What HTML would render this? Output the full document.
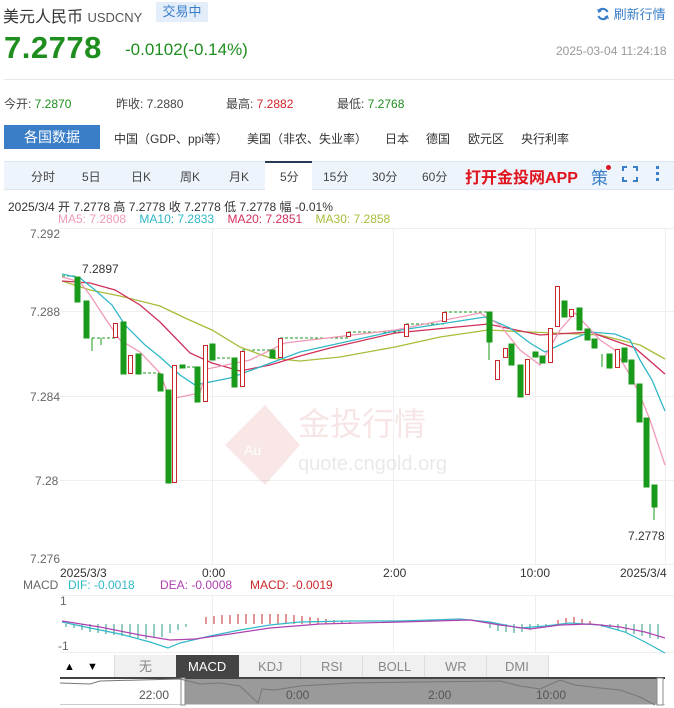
<!DOCTYPE html>
<html><head><meta charset="utf-8"><style>
*{margin:0;padding:0;box-sizing:border-box}
body{width:674px;height:708px;overflow:hidden;background:#fff;font-family:"Liberation Sans","Noto Sans CJK SC",sans-serif;color:#333;position:relative}
.a{position:absolute;white-space:nowrap}
</style></head><body>
<div class="a" style="left:3px;top:3px;font-size:16px;color:#333">美元人民币 <span style="font-size:13px;color:#555">USDCNY</span></div>
<div class="a" style="left:156px;top:2px;width:52px;height:20px;background:#e3eefa;color:#3a7ec8;font-size:13px;line-height:20px;text-align:center">交易中</div>
<div class="a" style="left:596px;top:4px;font-size:13px;color:#3a7ec8"><svg width="14" height="14" viewBox="0 0 14 14" style="vertical-align:-2px"><path d="M11.5 5A5 5 0 0 0 2.5 4.5M2.5 9A5 5 0 0 0 11.5 9.5" stroke="#3a7ec8" stroke-width="2.2" fill="none"/><path d="M1 2l1.5 4 3.5-2z M13 12l-1.5-4-3.5 2z" fill="#3a7ec8"/></svg> 刷新行情</div>
<div class="a" style="left:4px;top:30px;font-size:31px;font-weight:bold;color:#1e8e1e;letter-spacing:0.5px">7.2778</div>
<div class="a" style="left:125px;top:40px;font-size:17px;color:#1e8e1e">-0.0102(-0.14%)</div>
<div class="a" style="left:556px;top:44px;font-size:12px;color:#999">2025-03-04 11:24:18</div>
<div class="a" style="left:4px;top:79px;width:670px;height:1px;background:#e8e8e8"></div>
<div class="a" style="left:4px;top:95px;font-size:12px;color:#444">今开: <span style="color:#1e8e1e">7.2870</span></div>
<div class="a" style="left:116px;top:95px;font-size:12px;color:#444">昨收: 7.2880</div>
<div class="a" style="left:226px;top:95px;font-size:12px;color:#444">最高: <span style="color:#d0252a">7.2882</span></div>
<div class="a" style="left:337px;top:95px;font-size:12px;color:#444">最低: <span style="color:#1e8e1e">7.2768</span></div>
<div class="a" style="left:4px;top:125px;width:96px;height:24px;background:#3a7ec8;color:#fff;font-size:14px;line-height:24px;text-align:center">各国数据</div>
<div class="a" style="left:114px;top:130px;font-size:12px;color:#333">中国（GDP、ppi等）</div>
<div class="a" style="left:247px;top:130px;font-size:12px;color:#333">美国（非农、失业率）</div>
<div class="a" style="left:385px;top:130px;font-size:12px;color:#333">日本</div>
<div class="a" style="left:426px;top:130px;font-size:12px;color:#333">德国</div>
<div class="a" style="left:468px;top:130px;font-size:12px;color:#333">欧元区</div>
<div class="a" style="left:521px;top:130px;font-size:12px;color:#333">央行利率</div>
<div class="a" style="left:4px;top:161px;width:670px;height:29px;background:#eef4fb;border-top:1px solid #dde6f0;border-bottom:1px solid #dde6f0"></div>
<div class="a" style="left:265px;top:161px;width:47px;height:30px;background:#fff;border-top:2px solid #2a3a55"></div>
<div class="a" style="top:168px;left:0;font-size:12px;color:#444;width:674px;height:16px">
<span class="a" style="left:31px">分时</span><span class="a" style="left:82px">5日</span><span class="a" style="left:131px">日K</span><span class="a" style="left:180px">周K</span><span class="a" style="left:229px">月K</span><span class="a" style="left:280px">5分</span><span class="a" style="left:323px">15分</span><span class="a" style="left:372px">30分</span><span class="a" style="left:422px">60分</span>
</div>
<div class="a" style="left:465px;top:164px;font-size:16px;font-weight:bold;color:#e0141e">打开金投网APP</div>
<div class="a" style="left:591px;top:164px;font-size:17px;color:#3a7ec8">策</div>
<div class="a" style="left:606px;top:165px;width:5px;height:5px;border-radius:50%;background:#e0141e"></div>
<svg class="a" style="left:622px;top:166px" width="16" height="16"><path d="M1 5V1h4M11 1h4v4M15 11v4h-4M5 15H1v-4" stroke="#3a7ec8" stroke-width="2" fill="none"/></svg>
<div class="a" style="left:656px;top:166px;width:3px;height:3px;background:#3a7ec8;box-shadow:0 6px 0 #3a7ec8,0 12px 0 #3a7ec8"></div>
<div class="a" style="left:8px;top:198px;font-size:12px;color:#333">2025/3/4 开 7.2778 高 7.2778 收 7.2778 低 7.2778 幅 -0.01%</div>
<div class="a" style="left:58px;top:212px;font-size:12px"><span style="color:#f09ab8">MA5: 7.2808</span>&nbsp;&nbsp;&nbsp;&nbsp;<span style="color:#30b8c8">MA10: 7.2833</span>&nbsp;&nbsp;&nbsp;&nbsp;<span style="color:#d0305a">MA20: 7.2851</span>&nbsp;&nbsp;&nbsp;&nbsp;<span style="color:#a8bc3a">MA30: 7.2858</span></div>

<svg class="a" style="left:0;top:0" width="674" height="708" font-family="Liberation Sans, sans-serif" font-size="12">
<g stroke="#eee" stroke-width="1">
<line x1="60" y1="228.5" x2="674" y2="228.5"/><line x1="60" y1="311.5" x2="674" y2="311.5"/><line x1="60" y1="396.5" x2="674" y2="396.5"/><line x1="60" y1="480.5" x2="674" y2="480.5"/><line x1="60" y1="564.5" x2="674" y2="564.5"/>
<line x1="212.5" y1="228" x2="212.5" y2="565"/><line x1="393.5" y1="228" x2="393.5" y2="565"/><line x1="535.5" y1="228" x2="535.5" y2="565"/><line x1="665.5" y1="228" x2="665.5" y2="565"/>
<line x1="60" y1="595.5" x2="674" y2="595.5"/><line x1="60" y1="652.5" x2="674" y2="652.5"/>
<line x1="212.5" y1="595" x2="212.5" y2="652"/><line x1="393.5" y1="595" x2="393.5" y2="652"/><line x1="535.5" y1="595" x2="535.5" y2="652"/>
</g>
<g fill="#666"><text x="30" y="238">7.292</text><text x="30" y="316">7.288</text><text x="30" y="401">7.284</text><text x="35" y="485">7.28</text><text x="30" y="563">7.276</text></g>
<g opacity="0.12"><path d="M265 405 L300 445 L265 485 L225 445Z" fill="#d04040"/><text x="244" y="455" fill="#fff" font-size="14">Au</text><text x="298" y="435" fill="#c03030" font-size="32" font-family="Noto Sans CJK SC">金投行情</text><text x="298" y="470" fill="#555" font-size="20">quote.cngold.org</text></g>
<g stroke="#1a9a1a" stroke-dasharray="3,2"><line x1="62" y1="276" x2="77" y2="276"/><line x1="92" y1="338" x2="115" y2="338"/><line x1="138" y1="373" x2="160" y2="373"/><line x1="182" y1="367" x2="197" y2="367"/><line x1="212" y1="358" x2="234" y2="358"/><line x1="242" y1="350" x2="272" y2="350"/><line x1="280" y1="338" x2="348" y2="338"/><line x1="348" y1="332" x2="406" y2="332"/><line x1="406" y1="324" x2="444" y2="324"/><line x1="444" y1="312" x2="489" y2="312"/></g>
<g fill="none" stroke-width="1.3">
<polyline stroke="#a8bc3a" points="62,281 90,290 120,296 160,306 185,318 212,330 240,347 270,358 300,361 340,357 395,347 440,337 488,330 530,332 600,335 640,345 665,359"/>
<polyline stroke="#d0305a" points="62,281 90,283 115,290 140,305 160,322 190,353 212,363 240,371 270,365 300,356 330,348 395,333 488,324 540,335 590,332 635,348 665,374"/>
<polyline stroke="#30b8c8" points="62,274 80,278 95,290 112,305 125,325 145,345 160,357 180,375 195,385 230,378 260,367 300,352 395,331 485,317 510,328 530,343 545,352 570,340 590,332 615,334 630,340 640,360 652,380 665,411"/>
<polyline stroke="#f09ab8" points="62,277 80,282 90,295 105,318 120,340 140,352 160,373 170,399 200,393 207,369 250,360 285,343 395,330 480,313 500,325 520,350 540,365 560,330 575,313 600,340 615,350 630,375 640,395 650,420 665,465"/>
</g>
<g stroke-width="1">
<g fill="#1a9a1a" stroke="#1a9a1a">
<rect x="75" y="277" width="5" height="25"/><rect x="84" y="301" width="5" height="37"/><line x1="92" y1="338" x2="92" y2="351"/><line x1="101" y1="338" x2="101" y2="345"/><rect x="121" y="322" width="5" height="52"/><rect x="136" y="354" width="5" height="20"/><rect x="158" y="374" width="5" height="17"/><rect x="166" y="390" width="5" height="93"/><rect x="180" y="365" width="5" height="3"/><rect x="195" y="367" width="5" height="35"/><rect x="210" y="344" width="5" height="16"/><rect x="232" y="358" width="5" height="29"/><rect x="270" y="350" width="5" height="8"/><rect x="487" y="312" width="5" height="30"/><line x1="489" y1="342" x2="489" y2="360"/><rect x="509" y="344" width="5" height="21"/><rect x="518" y="365" width="5" height="32"/><rect x="533" y="352" width="5" height="5"/><rect x="540" y="356" width="5" height="7"/><rect x="562" y="301" width="5" height="16"/><rect x="577" y="308" width="5" height="22"/><rect x="585" y="329" width="5" height="11"/><rect x="592" y="339" width="5" height="9"/><line x1="602" y1="354" x2="602" y2="367"/><rect x="607" y="354" width="5" height="14"/><rect x="622" y="348" width="5" height="14"/><rect x="629" y="360" width="5" height="24"/><rect x="637" y="384" width="5" height="38"/><rect x="644" y="418" width="5" height="69"/><rect x="652" y="485" width="5" height="22"/><line x1="654" y1="507" x2="654" y2="520"/>
</g>
<g fill="#fff" stroke="#c8282a">
<rect x="113.5" y="323.5" width="4" height="14"/><rect x="128.5" y="355.5" width="4" height="18"/><rect x="172.5" y="365.5" width="4" height="117"/><rect x="203.5" y="345.5" width="4" height="56"/><rect x="240.5" y="351.5" width="4" height="35"/><rect x="278.5" y="338.5" width="4" height="19"/><rect x="346.5" y="332.5" width="4" height="4"/><rect x="404.5" y="324.5" width="4" height="12"/><rect x="442.5" y="312.5" width="4" height="9"/><rect x="495.5" y="360.5" width="4" height="19"/><rect x="503.5" y="348.5" width="4" height="9"/><rect x="525.5" y="359.5" width="4" height="35"/><rect x="548.5" y="328.5" width="4" height="34"/><rect x="555.5" y="286.5" width="4" height="40"/><rect x="569.5" y="309.5" width="4" height="7"/><rect x="615.5" y="349.5" width="4" height="18"/>
</g></g>
<text x="82" y="273" fill="#333">7.2897</text><text x="628" y="540" fill="#333">7.2778</text>
<g fill="#333"><text x="60" y="577">2025/3/3</text><text x="202" y="577">0:00</text><text x="383" y="577">2:00</text><text x="520" y="577">10:00</text><text x="620" y="577">2025/3/4</text></g>
<text x="23" y="589" fill="#666">MACD</text><text x="68" y="589" fill="#30b8c8">DIF: -0.0018</text><text x="160" y="589" fill="#b040b0">DEA: -0.0008</text><text x="250" y="589" fill="#c8282a">MACD: -0.0019</text>
<text x="60" y="605" fill="#666">1</text><text x="58" y="650" fill="#666">-1</text>
<g stroke="#2a9a8a"><path d="M66 624v3M74 624v4M82 624v6M90 624v8M98 624v9M106 624v10M114 624v11M122 624v12M130 624v13M138 624v14M146 624v15M154 624v14M162 624v13M170 624v9M178 624v6M186 624v3M490 624v4M498 624v7M506 624v8M514 624v9M522 624v8M530 624v6M538 624v4M546 624v2M602 624v3M610 624v4M618 624v6M626 624v8M634 624v10M642 624v12M650 624v14M658 624v15"/></g>
<g stroke="#c8282a"><path d="M206 624v-7M214 624v-8M222 624v-9M230 624v-9M238 624v-10M246 624v-10M254 624v-10M262 624v-10M270 624v-10M278 624v-10M286 624v-10M294 624v-9M302 624v-8M310 624v-7M318 624v-6M326 624v-5M334 624v-4M342 624v-3M350 624v-2M558 624v-4M566 624v-6M574 624v-7M582 624v-5M590 624v-3"/></g>
<polyline fill="none" stroke="#30b8c8" stroke-width="1.2" points="62,622 90,628 120,634 150,642 168,648 180,643 210,636 240,630 270,625 300,622 350,621 400,621 460,619 490,622 520,628 545,626 570,623 600,625 625,632 645,642 665,653"/>
<polyline fill="none" stroke="#b040b0" stroke-width="1.2" points="62,621 100,627 140,635 170,640 195,639 230,634 270,628 320,624 400,622 470,620 500,625 530,629 560,625 590,624 620,627 645,632 665,638"/>
<rect x="60" y="655" width="489" height="22" fill="#f0f0f0"/>
<rect x="60" y="655" width="54" height="22" fill="#fff"/>
<rect x="176" y="655" width="63" height="22" fill="#444"/>
<g stroke="#ddd"><line x1="114.5" y1="655" x2="114.5" y2="677"/><line x1="300.5" y1="655" x2="300.5" y2="677"/><line x1="362.5" y1="655" x2="362.5" y2="677"/><line x1="424.5" y1="655" x2="424.5" y2="677"/><line x1="486.5" y1="655" x2="486.5" y2="677"/><line x1="548.5" y1="655" x2="548.5" y2="677"/></g>
<text x="64" y="670" font-size="11">▲</text><text x="87" y="670" font-size="11">▼</text>
<g font-size="13" fill="#888"><text x="139" y="671">无</text><text x="188" y="671" fill="#fff">MACD</text><text x="258" y="671">KDJ</text><text x="321" y="671">RSI</text><text x="378" y="671">BOLL</text><text x="445" y="671">WR</text><text x="505" y="671">DMI</text></g>
<rect x="60" y="677" width="605" height="2" fill="#444"/>
<rect x="184" y="679" width="475" height="26" fill="#9a9a9a"/>
<rect x="60" y="704" width="605" height="1" fill="#ccc"/>
<rect x="181" y="678" width="4" height="27" fill="#fff" stroke="#888"/><rect x="657" y="678" width="6" height="27" fill="#fff" stroke="#888"/>
<polyline fill="none" stroke="#777" points="60,683 90,684 100,681 140,680 180,679 200,684 220,683 240,686 258,703 262,689 275,690 300,686 350,683 420,682 500,681 520,686 540,689 560,680 575,685 600,688 620,690 640,697 655,705"/>
<g fill="#555"><text x="139" y="699">22:00</text><text x="286" y="699">0:00</text><text x="428" y="699">2:00</text><text x="536" y="699">10:00</text></g>
</svg>
</body></html>
